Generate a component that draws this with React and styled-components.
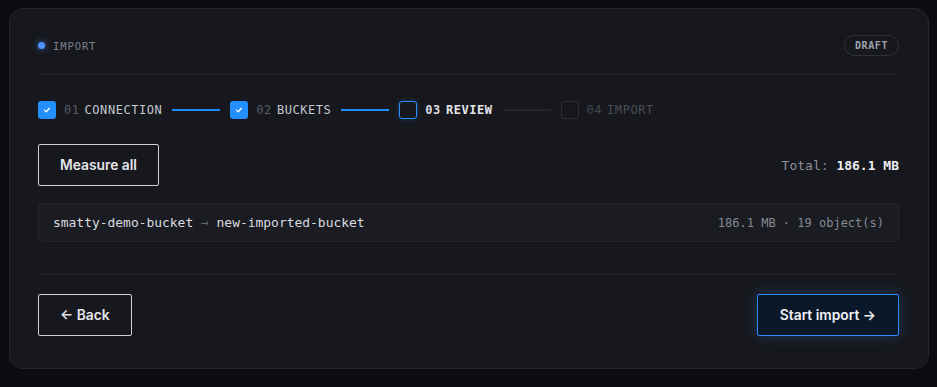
import styled, { createGlobalStyle, css } from "styled-components";

const GlobalStyle = createGlobalStyle`
  html, body {
    margin: 0;
    background: #0c0d11;
  }
  body {
    padding: 8px 8px 0 9px;
    font-family: Inter, "Noto Sans", sans-serif;
  }
`;

const mono = `"DejaVu Sans Mono", "Liberation Mono", monospace`;

const Card = styled.div`
  width: 920px;
  box-sizing: border-box;
  background: #17181d;
  border: 1px solid #26272e;
  border-radius: 14px;
  padding: 26px 29px 32px 28px;
  display: flex;
  flex-direction: column;
`;

const Header = styled.div`
  display: flex;
  align-items: center;
  justify-content: space-between;
  height: 21px;
`;

const Title = styled.div`
  display: flex;
  align-items: center;
  gap: 8px;
  font-family: ${mono};
  font-size: 10.5px;
  letter-spacing: 0.9px;
  color: #7d828e;
`;

const Dot = styled.span`
  width: 7px;
  height: 7px;
  border-radius: 50%;
  background: #4c93ff;
  box-shadow: 0 0 6px rgba(76, 147, 255, 0.7);
`;

const Badge = styled.span`
  height: 21px;
  width: 55px;
  box-sizing: border-box;
  display: flex;
  align-items: center;
  justify-content: center;
  border: 1px solid #30323a;
  border-radius: 11px;
  font-family: ${mono};
  font-size: 10px;
  font-weight: 700;
  letter-spacing: 0.6px;
  color: #9da2ad;
`;

const Divider = styled.div`
  height: 1px;
  background: #26272e;
  margin: ${(p) => p.$margin};
`;

const Steps = styled.div`
  display: flex;
  align-items: center;
  gap: 10px;
  height: 18px;
`;

const Step = styled.div`
  display: flex;
  align-items: center;
  gap: 8px;
  font-family: ${mono};
  font-size: 12px;
  letter-spacing: 0.55px;
`;

const Box = styled.span`
  width: 18px;
  height: 18px;
  box-sizing: border-box;
  border-radius: 3px;
  display: flex;
  align-items: center;
  justify-content: center;
  ${(p) =>
    p.$state === "done" &&
    css`
      background: #2490ff;
    `}
  ${(p) =>
    p.$state === "current" &&
    css`
      border: 1.5px solid #2b8fff;
      box-shadow: 0 0 4px rgba(43, 143, 255, 0.35);
    `}
  ${(p) =>
    p.$state === "todo" &&
    css`
      border: 1px solid #2b2d34;
    `}
`;

const Num = styled.span`
  color: ${(p) =>
    p.$state === "current" ? "#d8dbe2" : p.$state === "done" ? "#575c68" : "#444853"};
  font-weight: ${(p) => (p.$state === "current" ? 700 : 400)};
`;

const Label = styled.span`
  color: ${(p) =>
    p.$state === "current" ? "#e4e6ec" : p.$state === "done" ? "#c3c7d0" : "#4a4e59"};
  font-weight: ${(p) => (p.$state === "current" ? 700 : 400)};
  margin-left: -3px;
`;

const Line = styled.span`
  width: 48px;
  height: 2px;
  margin-left: 2px;
  background: ${(p) => (p.$active ? "#1f8cff" : "#24262d")};
`;

const Toolbar = styled.div`
  display: flex;
  align-items: center;
  justify-content: space-between;
  margin-top: 25px;
`;

const Button = styled.button`
  height: 42px;
  box-sizing: border-box;
  padding: 0 ${(p) => (p.$primary ? 22 : 21)}px;
  border-radius: 2px;
  background: transparent;
  border: 1px solid #cfd1d6;
  color: #e4e5e9;
  font-family: Inter, "Noto Sans", sans-serif;
  font-size: 13.8px;
  font-weight: 600;
  cursor: pointer;
  ${(p) =>
    p.$primary &&
    css`
      background: #0a1829;
      border-color: #2a8cff;
      color: #eef1f6;
      box-shadow: 0 0 14px rgba(42, 140, 255, 0.28);
    `}
`;

const Total = styled.div`
  font-family: ${mono};
  font-size: 13px;
  color: #8d929d;
  b {
    color: #eceef2;
    font-weight: 700;
  }
`;

const Row = styled.div`
  margin-top: 17px;
  height: 39px;
  box-sizing: border-box;
  display: flex;
  align-items: center;
  justify-content: space-between;
  padding: 0 14px;
  background: #1a1c22;
  border: 1px solid #24262d;
  border-radius: 4px;
  font-family: ${mono};
`;

const Route = styled.span`
  font-size: 12.95px;
  color: #d9dbe0;
  i {
    font-style: normal;
    color: #60646e;
  }
`;

const Meta = styled.span`
  font-size: 12px;
  color: #858a95;
`;

const Footer = styled.div`
  display: flex;
  justify-content: space-between;
`;

const Check = () => (
  <svg width="8" height="8" viewBox="0 0 10 10" fill="none">
    <path d="M2 5.3 L4.1 7.2 L8 2.8" stroke="#fff" strokeWidth="1.6" strokeLinecap="round" strokeLinejoin="round" />
  </svg>
);

const steps = [
  { n: "01", label: "CONNECTION", state: "done" },
  { n: "02", label: "BUCKETS", state: "done" },
  { n: "03", label: "REVIEW", state: "current" },
  { n: "04", label: "IMPORT", state: "todo" },
];

export default function App() {
  return (
    <>
      <GlobalStyle />
      <Card>
        <Header>
          <Title>
            <Dot />
            IMPORT
          </Title>
          <Badge>DRAFT</Badge>
        </Header>
        <Divider $margin="18px 0 26px" />
        <Steps>
          {steps.map((s, i) => (
            <Step key={s.n}>
              <Box $state={s.state}>{s.state === "done" && <Check />}</Box>
              <Num $state={s.state}>{s.n}</Num>
              <Label $state={s.state}>{s.label}</Label>
              {i < steps.length - 1 && <Line $active={s.state === "done"} />}
            </Step>
          ))}
        </Steps>
        <Toolbar>
          <Button>Measure all</Button>
          <Total>
            Total: <b>186.1 MB</b>
          </Total>
        </Toolbar>
        <Row>
          <Route>
            smatty-demo-bucket <i>→</i> new-imported-bucket
          </Route>
          <Meta>186.1 MB · 19 object(s)</Meta>
        </Row>
        <Divider $margin="32px 0 19px" />
        <Footer>
          <Button>← Back</Button>
          <Button $primary>Start import →</Button>
        </Footer>
      </Card>
    </>
  );
}
